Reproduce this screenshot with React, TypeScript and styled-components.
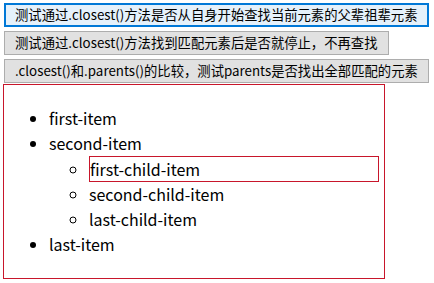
import styled, { createGlobalStyle } from 'styled-components';

const GlobalStyle = createGlobalStyle`
  body {
    margin: 0;
    background: #ffffff;
    font-family: "Noto Sans CJK SC", "Noto Sans", sans-serif;
    color: #000;
  }
`;

const Page = styled.div`
  padding: 3px 3px 0 3px;
  display: flex;
  flex-direction: column;
  align-items: flex-start;
`;

const TestButton = styled.button<{ $focused?: boolean }>`
  display: block;
  flex-shrink: 0;
  box-sizing: border-box;
  height: 24px;
  margin: 0 0 4px 1px;
  padding: 0 ${(p) => (p.$focused ? '9px' : '10px')};
  font-family: "Noto Sans CJK SC", "Noto Sans", sans-serif;
  font-size: 13.333px;
  line-height: 20px;
  color: #000;
  background: ${(p) => (p.$focused ? '#e5f1fb' : '#e1e1e1')};
  border: ${(p) => (p.$focused ? '2px solid #0078d7' : '1px solid #adadad')};
  white-space: nowrap;
  cursor: pointer;
  &:last-of-type {
    margin-bottom: 1px;
  }
`;

const Box = styled.div`
  box-sizing: border-box;
  width: 382px;
  border: 1px solid #c8162b;
  padding: 5px;
`;

const List = styled.ul<{ $nested?: boolean }>`
  margin: ${(p) => (p.$nested ? '0' : '16px 0')};
  padding-left: 40px;
  list-style-type: ${(p) => (p.$nested ? 'circle' : 'disc')};
  font-size: 16px;
  line-height: 25px;
`;

const Item = styled.li<{ $marked?: boolean }>`
  border: ${(p) => (p.$marked ? '1px solid #c8162b' : 'none')};
  line-height: ${(p) => (p.$marked ? '24px' : '25px')};
`;

export default function App() {
  return (
    <>
      <GlobalStyle />
      <Page>
        <TestButton $focused>测试通过.closest()方法是否从自身开始查找当前元素的父辈祖辈元素</TestButton>
        <TestButton>测试通过.closest()方法找到匹配元素后是否就停止，不再查找</TestButton>
        <TestButton>.closest()和.parents()的比较，测试parents是否找出全部匹配的元素</TestButton>
        <Box>
          <List>
            <Item>first-item</Item>
            <Item>
              second-item
              <List $nested>
                <Item $marked>first-child-item</Item>
                <Item>second-child-item</Item>
                <Item>last-child-item</Item>
              </List>
            </Item>
            <Item>last-item</Item>
          </List>
        </Box>
      </Page>
    </>
  );
}
